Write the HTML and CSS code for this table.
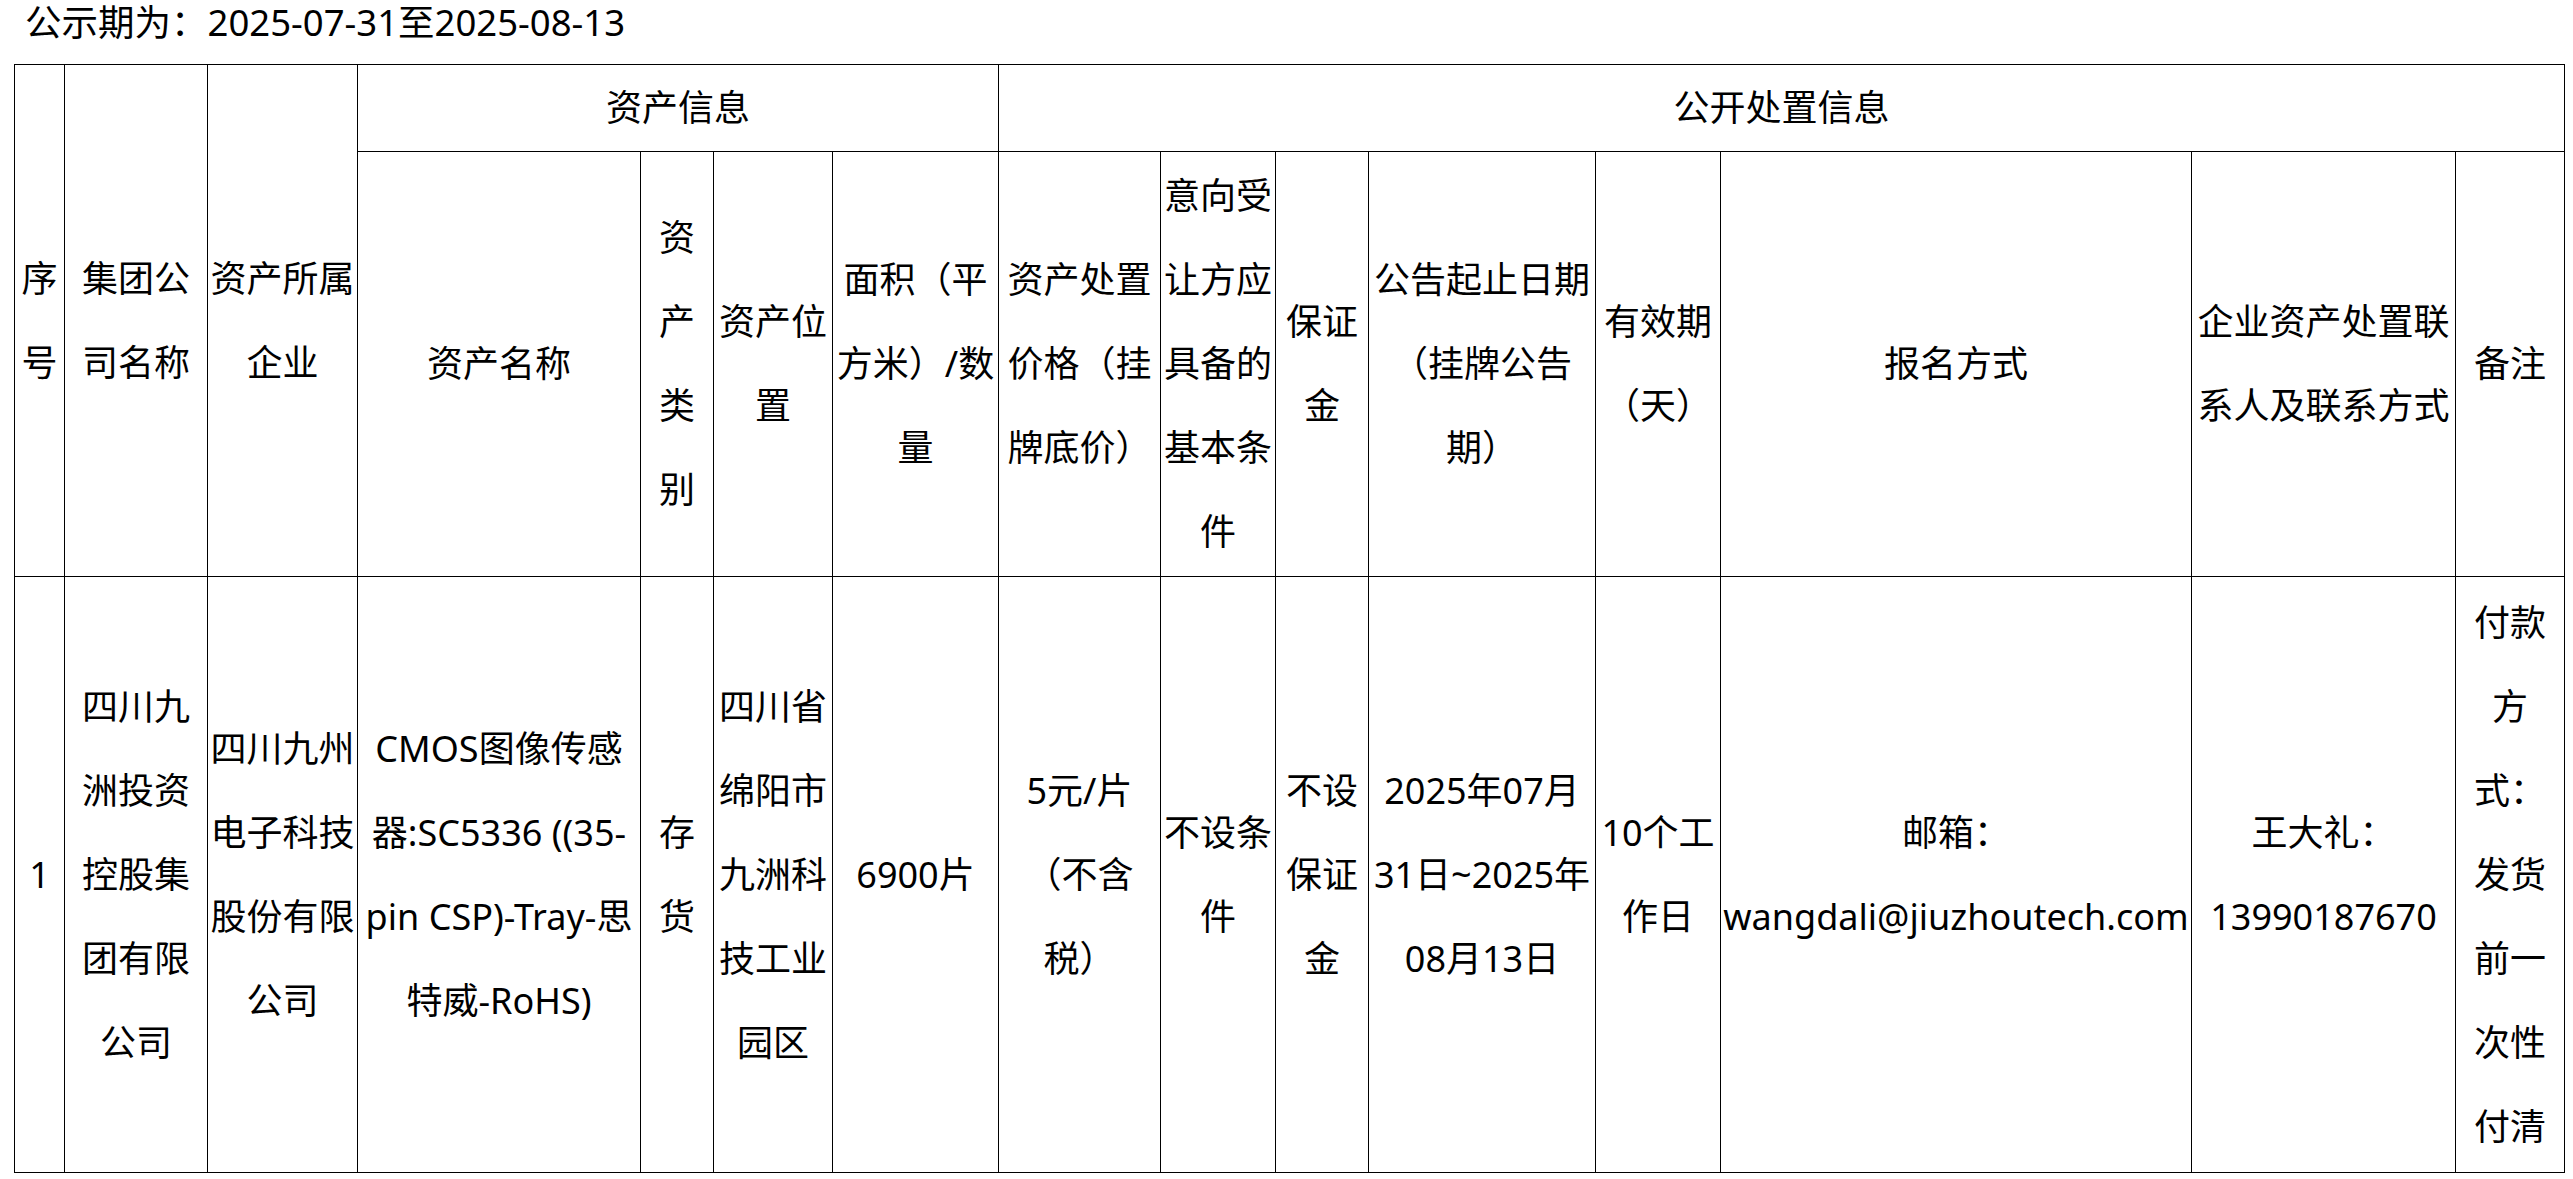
FILE: index.html
```html
<!DOCTYPE html>
<html lang="zh-CN">
<head>
<meta charset="utf-8">
<title>资产处置公示</title>
<link rel="stylesheet" href="styles.css">
</head>
<body>
<main class="page">
  <p class="period">公示期为：2025-07-31至2025-08-13</p>
  <table class="assets">
    <colgroup>
      <col class="c-no">
      <col class="c-group">
      <col class="c-owner">
      <col class="c-name">
      <col class="c-type">
      <col class="c-loc">
      <col class="c-area">
      <col class="c-price">
      <col class="c-cond">
      <col class="c-deposit">
      <col class="c-date">
      <col class="c-valid">
      <col class="c-signup">
      <col class="c-contact">
      <col class="c-note">
    </colgroup>
    <thead>
      <tr class="row-group">
        <th rowspan="2">序号</th>
        <th rowspan="2">集团公司名称</th>
        <th rowspan="2">资产所属企业</th>
        <th colspan="4">资产信息</th>
        <th colspan="8">公开处置信息</th>
      </tr>
      <tr class="row-head">
        <th>资产名称</th>
        <th>资产类别</th>
        <th>资产位置</th>
        <th>面积（平方米）/数量</th>
        <th>资产处置价格（挂牌底价）</th>
        <th>意向受让方应具备的基本条件</th>
        <th>保证金</th>
        <th>公告起止日期（挂牌公告期）</th>
        <th>有效期（天）</th>
        <th>报名方式</th>
        <th>企业资产处置联系人及联系方式</th>
        <th>备注</th>
      </tr>
    </thead>
    <tbody>
      <tr class="row-data">
        <td>1</td>
        <td>四川九洲投资控股集团有限公司</td>
        <td>四川九州电子科技股份有限公司</td>
        <td>CMOS图像传感器:SC5336 ((35-pin CSP)-Tray-思特威-RoHS)</td>
        <td>存货</td>
        <td>四川省绵阳市九洲科技工业园区</td>
        <td>6900片</td>
        <td>5元/片（不含税）</td>
        <td>不设条件</td>
        <td>不设保证金</td>
        <td>2025年07月31日~2025年08月13日</td>
        <td>10个工作日</td>
        <td>邮箱：wangdali@jiuzhoutech.com</td>
        <td>王大礼：13990187670</td>
        <td>付款方式：发货前一次性付清</td>
      </tr>
    </tbody>
  </table>
</main>
</body>
</html>
```
FILE: styles.css
```css
html, body {
  margin: 0;
  padding: 0;
  background: #fff;
}

body {
  color: #000;
  font-family: "Noto Sans", "Noto Sans CJK SC", sans-serif;
  font-size: 36px;
}

.page {
  padding: 0 0 0 14px;
}

.period {
  margin: 0 0 20px 0;
  padding-left: 11px;
  font-size: 36.5px;
  line-height: 44px;
  height: 44px;
}

.assets {
  table-layout: fixed;
  border-collapse: collapse;
  width: 2551px;
}

.assets th,
.assets td {
  border: 1px solid #000;
  padding: 0 1px;
  font-weight: normal;
  text-align: center;
  vertical-align: middle;
  line-height: 84px;
  word-break: normal;
}

.c-no { width: 50px; }
.c-group { width: 143px; }
.c-owner { width: 150px; }
.c-name { width: 283px; }
.c-type { width: 73px; }
.c-loc { width: 119px; }
.c-area { width: 166px; }
.c-price { width: 162px; }
.c-cond { width: 115px; }
.c-deposit { width: 93px; }
.c-date { width: 227px; }
.c-valid { width: 125px; }
.c-signup { width: 471px; }
.c-contact { width: 264px; }
.c-note { width: 109px; }

.row-group { height: 87px; }
.row-head { height: 425px; }
.row-data { height: 596px; }
```
